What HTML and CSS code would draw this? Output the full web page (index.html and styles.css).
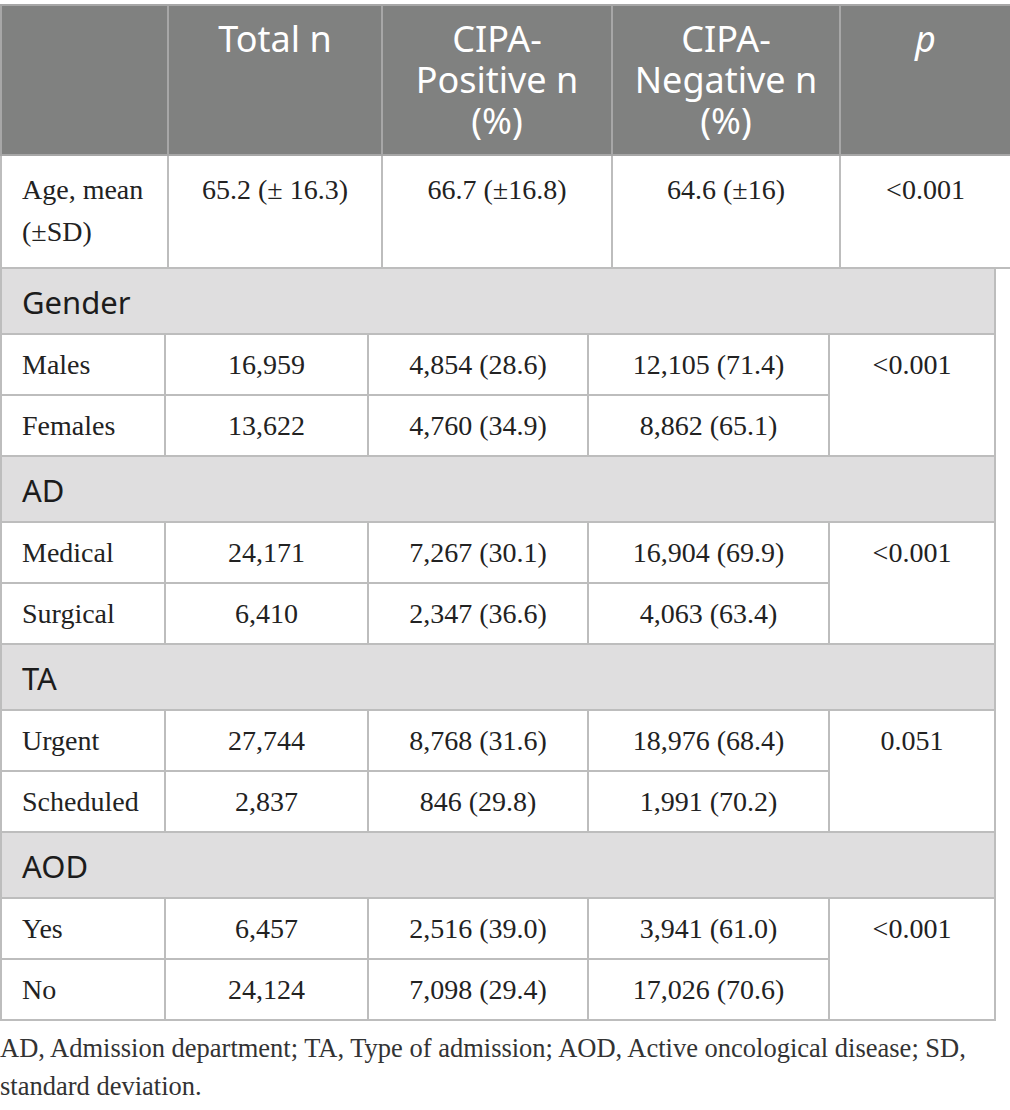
FILE: index.html
```html
<!DOCTYPE html>
<html lang="en">
<head>
  <meta charset="UTF-8" />
  <title>CIPA table</title>
  <link rel="stylesheet" href="styles.css">
</head>
<body>
  <table class="head-table">
    <colgroup>
      <col class="c1"><col class="c2"><col class="c3"><col class="c4"><col class="c5">
    </colgroup>
    <thead>
      <tr>
        <th></th>
        <th>Total n</th>
        <th>CIPA-<br>Positive n<br>(%)</th>
        <th>CIPA-<br>Negative n<br>(%)</th>
        <th><i>p</i></th>
      </tr>
    </thead>
    <tbody>
      <tr class="age">
        <td class="label">Age, mean<br>(±SD)</td>
        <td>65.2 (± 16.3)</td>
        <td>66.7 (±16.8)</td>
        <td>64.6 (±16)</td>
        <td>&lt;0.001</td>
      </tr>
    </tbody>
  </table>

  <table class="body-table">
    <colgroup>
      <col class="b1"><col class="b2"><col class="b3"><col class="b4"><col class="b5">
    </colgroup>
    <tbody>
      <tr class="section"><td colspan="5">Gender</td></tr>
      <tr>
        <td class="label">Males</td><td>16,959</td><td>4,854 (28.6)</td><td>12,105 (71.4)</td>
        <td rowspan="2">&lt;0.001</td>
      </tr>
      <tr>
        <td class="label">Females</td><td>13,622</td><td>4,760 (34.9)</td><td>8,862 (65.1)</td>
      </tr>

      <tr class="section"><td colspan="5">AD</td></tr>
      <tr>
        <td class="label">Medical</td><td>24,171</td><td>7,267 (30.1)</td><td>16,904 (69.9)</td>
        <td rowspan="2">&lt;0.001</td>
      </tr>
      <tr>
        <td class="label">Surgical</td><td>6,410</td><td>2,347 (36.6)</td><td>4,063 (63.4)</td>
      </tr>

      <tr class="section"><td colspan="5">TA</td></tr>
      <tr>
        <td class="label">Urgent</td><td>27,744</td><td>8,768 (31.6)</td><td>18,976 (68.4)</td>
        <td rowspan="2">0.051</td>
      </tr>
      <tr>
        <td class="label">Scheduled</td><td>2,837</td><td>846 (29.8)</td><td>1,991 (70.2)</td>
      </tr>

      <tr class="section"><td colspan="5">AOD</td></tr>
      <tr>
        <td class="label">Yes</td><td>6,457</td><td>2,516 (39.0)</td><td>3,941 (61.0)</td>
        <td rowspan="2">&lt;0.001</td>
      </tr>
      <tr>
        <td class="label">No</td><td>24,124</td><td>7,098 (29.4)</td><td>17,026 (70.6)</td>
      </tr>
    </tbody>
  </table>

  <p class="note">AD, Admission department; TA, Type of admission; AOD, Active oncological disease; SD, standard deviation.</p>
</body>
</html>
```

FILE: styles.css
```css
body {
  margin: 0;
  padding-top: 4px;
  background: #fff;
  color: #222;
  font-family: "Liberation Serif", serif;
  font-size: 28px;
}
table {
  border-collapse: collapse;
  table-layout: fixed;
}
td, th {
  border: 2px solid #bdbdbd;
  vertical-align: top;
  text-align: center;
  padding: 9px 12px 8px;
  line-height: 42px;
}
td.label {
  text-align: left;
  padding-left: 20px;
}

/* top table */
.head-table {
  width: 1010px;
}
.head-table .c1 { width: 167px; }
.head-table .c2 { width: 214px; }
.head-table .c3 { width: 230px; }
.head-table .c4 { width: 228px; }
.head-table .c5 { width: 171px; }
.head-table th {
  background: #808180;
  border-color: #a7a7a7;
  color: #fff;
  font-family: "Noto Sans", sans-serif;
  font-weight: normal;
  font-size: 36px;
  line-height: 41px;
  padding: 12px 8px 13px;
}
.head-table .age td {
  padding-top: 13px;
  padding-bottom: 14px;
}

/* body table */
.body-table {
  width: 994px;
  margin-top: -2px;
}
.body-table .b1 { width: 164px; }
.body-table .b2 { width: 203px; }
.body-table .b3 { width: 220px; }
.body-table .b4 { width: 241px; }
.body-table .b5 { width: 166px; }
.section td {
  background: #dfdedf;
  text-align: left;
  font-family: "Noto Sans", sans-serif;
  font-size: 31px;
  line-height: 42px;
  padding: 12px 20px 10px;
  color: #1c1c1c;
}

.note {
  margin: 8px 0 0;
  font-size: 26.5px;
  line-height: 38px;
  color: #333;
  width: 1005px;
}
```
